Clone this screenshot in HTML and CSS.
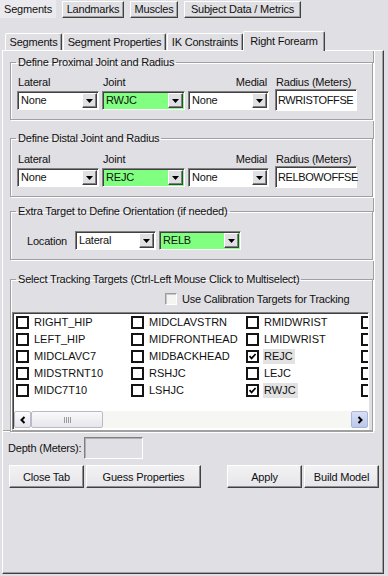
FILE: index.html
```html
<!DOCTYPE html>
<html>
<head>
    <title>Segments - Right Forearm</title>
    <meta name="viewport" content="width=device-width, initial-scale=1">
    <link rel="stylesheet" href="styles.css">
</head>
<body>
    <div class="maintabs">
        <div class="mtab active w-seg">Segments</div>
        <div class="mtab w-land">Landmarks</div>
        <div class="mtab w-mus">Muscles</div>
        <div class="mtab w-subj">Subject Data / Metrics</div>
    </div>

    <div class="subtabs">
        <div class="stab w-s1">Segments</div>
        <div class="stab w-s2">Segment Properties</div>
        <div class="stab w-s3">IK Constraints</div>
        <div class="stab active w-s4">Right Forearm</div>
    </div>

    <div class="panel">
        <div class="pane">
            <fieldset class="grp grp-prox">
                <legend>Define Proximal Joint and Radius</legend>
                <div class="jgrid">
                    <span class="lbl">Lateral</span>
                    <span class="lbl">Joint</span>
                    <span class="lbl right">Medial</span>
                    <span class="lbl rad">Radius (Meters)</span>
                    <div class="combo"><span class="combo-val">None</span><span class="combo-btn"><svg width="7" height="4" viewBox="0 0 7 4"><polygon points="0,0 7,0 3.5,4" fill="#000"/></svg></span></div>
                    <div class="combo green"><span class="combo-val">RWJC</span><span class="combo-btn"><svg width="7" height="4" viewBox="0 0 7 4"><polygon points="0,0 7,0 3.5,4" fill="#000"/></svg></span></div>
                    <div class="combo"><span class="combo-val">None</span><span class="combo-btn"><svg width="7" height="4" viewBox="0 0 7 4"><polygon points="0,0 7,0 3.5,4" fill="#000"/></svg></span></div>
                    <div class="tbox rad">RWRISTOFFSE</div>
                </div>
            </fieldset>

            <fieldset class="grp grp-dist">
                <legend>Define Distal Joint and Radius</legend>
                <div class="jgrid">
                    <span class="lbl">Lateral</span>
                    <span class="lbl">Joint</span>
                    <span class="lbl right">Medial</span>
                    <span class="lbl rad">Radius (Meters)</span>
                    <div class="combo"><span class="combo-val">None</span><span class="combo-btn"><svg width="7" height="4" viewBox="0 0 7 4"><polygon points="0,0 7,0 3.5,4" fill="#000"/></svg></span></div>
                    <div class="combo green"><span class="combo-val">REJC</span><span class="combo-btn"><svg width="7" height="4" viewBox="0 0 7 4"><polygon points="0,0 7,0 3.5,4" fill="#000"/></svg></span></div>
                    <div class="combo"><span class="combo-val">None</span><span class="combo-btn"><svg width="7" height="4" viewBox="0 0 7 4"><polygon points="0,0 7,0 3.5,4" fill="#000"/></svg></span></div>
                    <div class="tbox rad">RELBOWOFFSE</div>
                </div>
            </fieldset>

            <fieldset class="grp grp-extra">
                <legend>Extra Target to Define Orientation (if needed)</legend>
                <div class="loc-row">
                    <span class="loc-lbl">Location</span>
                    <div class="combo w81"><span class="combo-val">Lateral</span><span class="combo-btn"><svg width="7" height="4" viewBox="0 0 7 4"><polygon points="0,0 7,0 3.5,4" fill="#000"/></svg></span></div>
                    <div class="combo green w82"><span class="combo-val">RELB</span><span class="combo-btn"><svg width="7" height="4" viewBox="0 0 7 4"><polygon points="0,0 7,0 3.5,4" fill="#000"/></svg></span></div>
                </div>
            </fieldset>

            <fieldset class="grp grp-track">
                <legend>Select Tracking Targets (Ctrl-Left Mouse Click to Multiselect)</legend>
                <div class="calib"><span class="cbox flat"></span><span>Use Calibration Targets for Tracking</span></div>
                <div class="listbox">
                    <div class="items">
                        <div class="item"><span class="cbox"></span><span class="itxt">RIGHT_HIP</span></div>
                        <div class="item"><span class="cbox"></span><span class="itxt">MIDCLAVSTRN</span></div>
                        <div class="item"><span class="cbox"></span><span class="itxt">RMIDWRIST</span></div>
                        <div class="item"><span class="cbox"></span></div>

                        <div class="item"><span class="cbox"></span><span class="itxt">LEFT_HIP</span></div>
                        <div class="item"><span class="cbox"></span><span class="itxt">MIDFRONTHEAD</span></div>
                        <div class="item"><span class="cbox"></span><span class="itxt">LMIDWRIST</span></div>
                        <div class="item"><span class="cbox"></span></div>

                        <div class="item"><span class="cbox"></span><span class="itxt">MIDCLAVC7</span></div>
                        <div class="item"><span class="cbox"></span><span class="itxt">MIDBACKHEAD</span></div>
                        <div class="item"><span class="cbox"><svg width="9" height="9" viewBox="0 0 9 9"><path d="M1.5 4.2 L3.6 6.4 L7.6 2" stroke="#000" stroke-width="1.7" fill="none"/></svg></span><span class="itxt sel">REJC</span></div>
                        <div class="item"><span class="cbox"></span></div>

                        <div class="item"><span class="cbox"></span><span class="itxt">MIDSTRNT10</span></div>
                        <div class="item"><span class="cbox"></span><span class="itxt">RSHJC</span></div>
                        <div class="item"><span class="cbox"></span><span class="itxt">LEJC</span></div>
                        <div class="item"><span class="cbox"></span></div>

                        <div class="item"><span class="cbox"></span><span class="itxt">MIDC7T10</span></div>
                        <div class="item"><span class="cbox"></span><span class="itxt">LSHJC</span></div>
                        <div class="item"><span class="cbox"><svg width="9" height="9" viewBox="0 0 9 9"><path d="M1.5 4.2 L3.6 6.4 L7.6 2" stroke="#000" stroke-width="1.7" fill="none"/></svg></span><span class="itxt sel">RWJC</span></div>
                        <div class="item"><span class="cbox"></span></div>
                    </div>
                    <div class="hscroll">
                        <span class="sb-btn"><svg width="8" height="8" viewBox="0 0 8 8"><path d="M5.5 1 L2.5 4 L5.5 7" stroke="#000" stroke-width="2" fill="none"/></svg></span>
                        <span class="sb-thumb"><span class="grip"></span></span>
                        <span class="sb-track"></span>
                        <span class="sb-btn blue"><svg width="8" height="8" viewBox="0 0 8 8"><path d="M2.5 1 L5.5 4 L2.5 7" stroke="#000" stroke-width="2" fill="none"/></svg></span>
                    </div>
                </div>
            </fieldset>
        </div>

        <div class="depth">
            <span>Depth (Meters):</span>
            <span class="dbox"></span>
        </div>

        <div class="btns">
            <button class="btn w75">Close Tab</button>
            <button class="btn w115">Guess Properties</button>
            <button class="btn w75 push">Apply</button>
            <button class="btn w75">Build Model</button>
        </div>
    </div>
</body>
</html>
```

FILE: styles.css
```css
body { margin: 0; width: 388px; height: 576px; overflow: hidden; background: #e0dfe3; font-family: "Liberation Sans", Arial, sans-serif; font-size: 11px; letter-spacing: -0.2px; color: #111; }

/* top level tabs (look like buttons) */
.maintabs { display: flex; gap: 6px; height: 19px; }
.mtab { box-sizing: border-box; height: 17px; margin-top: 1px; line-height: 15px; text-align: center; border: 1px solid; border-color: #fff #404040 #404040 #fff; box-shadow: inset -1px -1px #a0a0a0; }
.mtab.active { margin-top: 0; height: 18px; border-color: #ebeaee; box-shadow: none; background: #ebeaee; line-height: 17px; }
.w-seg { width: 56px; }
.w-land { width: 62px; }
.w-mus { width: 48px; }
.w-subj { width: 117px; }

/* inner tabs */
.subtabs { display: flex; align-items: flex-end; gap: 1px; height: 19px; margin-top: 12px; padding-left: 5px; }
.stab { box-sizing: border-box; height: 17px; line-height: 16px; text-align: center; border: 1px solid; border-bottom: none; border-color: #fff #404040 #fff #fff; box-shadow: inset -1px 0 #a0a0a0; border-radius: 2px 2px 0 0; }
.stab.active { height: 20px; margin-left: -1px; margin-bottom: -1px; line-height: 18px; background: #e0dfe3; position: relative; }
.w-s1 { width: 57px; }
.w-s2 { width: 103px; }
.w-s3 { width: 76px; }
.w-s4 { width: 82px; }

.panel { box-sizing: border-box; margin-left: 2px; width: 382px; height: 524px; border: 1px solid; border-color: #fff #404040 #404040 #fff; box-shadow: inset -1px -1px #a0a0a0; }
.pane { box-sizing: border-box; width: 371px; height: 380px; padding: 5px 0 0 7px; border-bottom: 1px solid #a0a0a0; border-right: 1px solid #a0a0a0; box-shadow: 0 1px #fff, 1px 0 #fff; }

/* group boxes */
.grp { margin: 0; padding: 0 6px 9px 6px; width: 363px; box-sizing: border-box; min-width: 0; border: 1px solid #a0a0a0; box-shadow: inset 1px 1px #fff, 1px 1px #fff; }
.grp legend { padding: 0 2px; margin-left: -1px; line-height: 13px; }
.grp-dist { margin-top: 12px; }
.grp-extra { margin-top: 8px; }
.grp-track { margin-top: 13px; padding-bottom: 1px; }

.jgrid { display: grid; grid-template-columns: 82px 83px 81px 85px; column-gap: 3px; row-gap: 2px; margin-top: 7px; align-items: center; }
.grp-dist .jgrid { margin-top: 8px; }
.lbl { line-height: 13px; padding-left: 1px; }
.lbl.right { text-align: right; padding-right: 2px; }
.rad { margin-left: 3px; }

.combo { display: flex; height: 19px; box-sizing: border-box; border: 1px solid; border-color: #808080 #fff #fff #808080; box-shadow: inset 1px 1px #404040; background: #fff; }
.combo.green { background: #80ff80; }
.combo-val { flex: 1; padding-left: 3px; line-height: 17px; overflow: hidden; white-space: nowrap; }
.combo-btn { width: 15px; height: 15px; margin: 1px 1px 1px 0; box-sizing: border-box; border: 1px solid; border-color: #fff #404040 #404040 #fff; box-shadow: inset -1px -1px #808080; background: #e0dfe3; display: flex; align-items: center; justify-content: center; }
.w81 { width: 81px; }
.w82 { width: 82px; }

.tbox { width: 82px; height: 22px; margin: -2px 0 -1px 3px; box-sizing: border-box; border: 1px solid; border-color: #808080 #fff #fff #808080; box-shadow: inset 1px 1px #404040; background: #fff; padding-left: 2px; line-height: 20px; letter-spacing: -0.4px; white-space: nowrap; }

.loc-row { display: flex; align-items: center; gap: 3px; margin-top: 13px; padding-left: 10px; }
.loc-lbl { width: 45px; }

/* tracking targets */
.calib { display: flex; align-items: center; gap: 5px; height: 13px; margin-top: 6px; padding-left: 148px; }
.cbox { width: 13px; height: 13px; box-sizing: border-box; border: 2px solid #141414; background: #fff; display: flex; align-items: center; justify-content: center; flex: none; }
.cbox.flat { width: 12px; height: 12px; border: 1px solid; border-color: #9a9a9a #fff #fff #9a9a9a; box-shadow: inset 1px 1px #c8c8c8; background: #f4f4f2; }

.listbox { display: flex; flex-direction: column; height: 118px; margin: 7px -3px 0 -5px; box-sizing: border-box; border: 1px solid; border-color: #808080 #fff #fff #808080; box-shadow: inset 1px 1px #404040; background: #fff; overflow: hidden; }
.items { flex: 1; display: grid; grid-template-columns: repeat(4, 115px); grid-auto-rows: 17px; padding: 1px 0 0 3px; overflow: hidden; }
.item { display: flex; align-items: center; white-space: nowrap; }
.itxt { margin-left: 4px; padding: 0 2px 0 1px; line-height: 15px; letter-spacing: 0; }
.itxt.sel { background: #e2e2e2; }

.hscroll { display: flex; height: 17px; margin: 0 0 1px 1px; }
.sb-btn { width: 17px; height: 17px; box-sizing: border-box; border: 1px solid #b9b9c9; border-radius: 2px; background: linear-gradient(#fdfdfd, #e4e4ec); display: flex; align-items: center; justify-content: center; }
.sb-btn.blue { background: linear-gradient(#d8e0f6, #bcc8ea); border-color: #a8b4d8; }
.sb-thumb { width: 72px; box-sizing: border-box; border: 1px solid #b9b9c9; border-radius: 2px; background: linear-gradient(#fafafa, #e6e6ec); display: flex; align-items: center; justify-content: center; }
.grip { width: 7px; height: 6px; background: repeating-linear-gradient(90deg, #9a9aa4 0 1px, transparent 1px 2px); }
.sb-track { flex: 1; background: #f6f6f2; }

/* bottom */
.depth { display: flex; align-items: center; gap: 3px; margin-top: 6px; padding-left: 5px; height: 22px; }
.dbox { width: 59px; height: 22px; box-sizing: border-box; border: 1px solid; border-color: #808080 #fff #fff #808080; box-shadow: inset 1px 1px #b0b0b0; }

.btns { display: flex; gap: 2px; margin-top: 6px; padding-left: 6px; }
.btn { height: 23px; padding: 0; font-family: inherit; font-size: 11px; letter-spacing: -0.2px; color: #111; background: linear-gradient(#f2f2f4, #e6e5e9); border: 1px solid; border-color: #fff #404040 #404040 #fff; box-shadow: inset -1px -1px #909090; border-radius: 0; }
.w75 { width: 75px; }
.w115 { width: 115px; }
.push { margin-left: 24px; }
```
